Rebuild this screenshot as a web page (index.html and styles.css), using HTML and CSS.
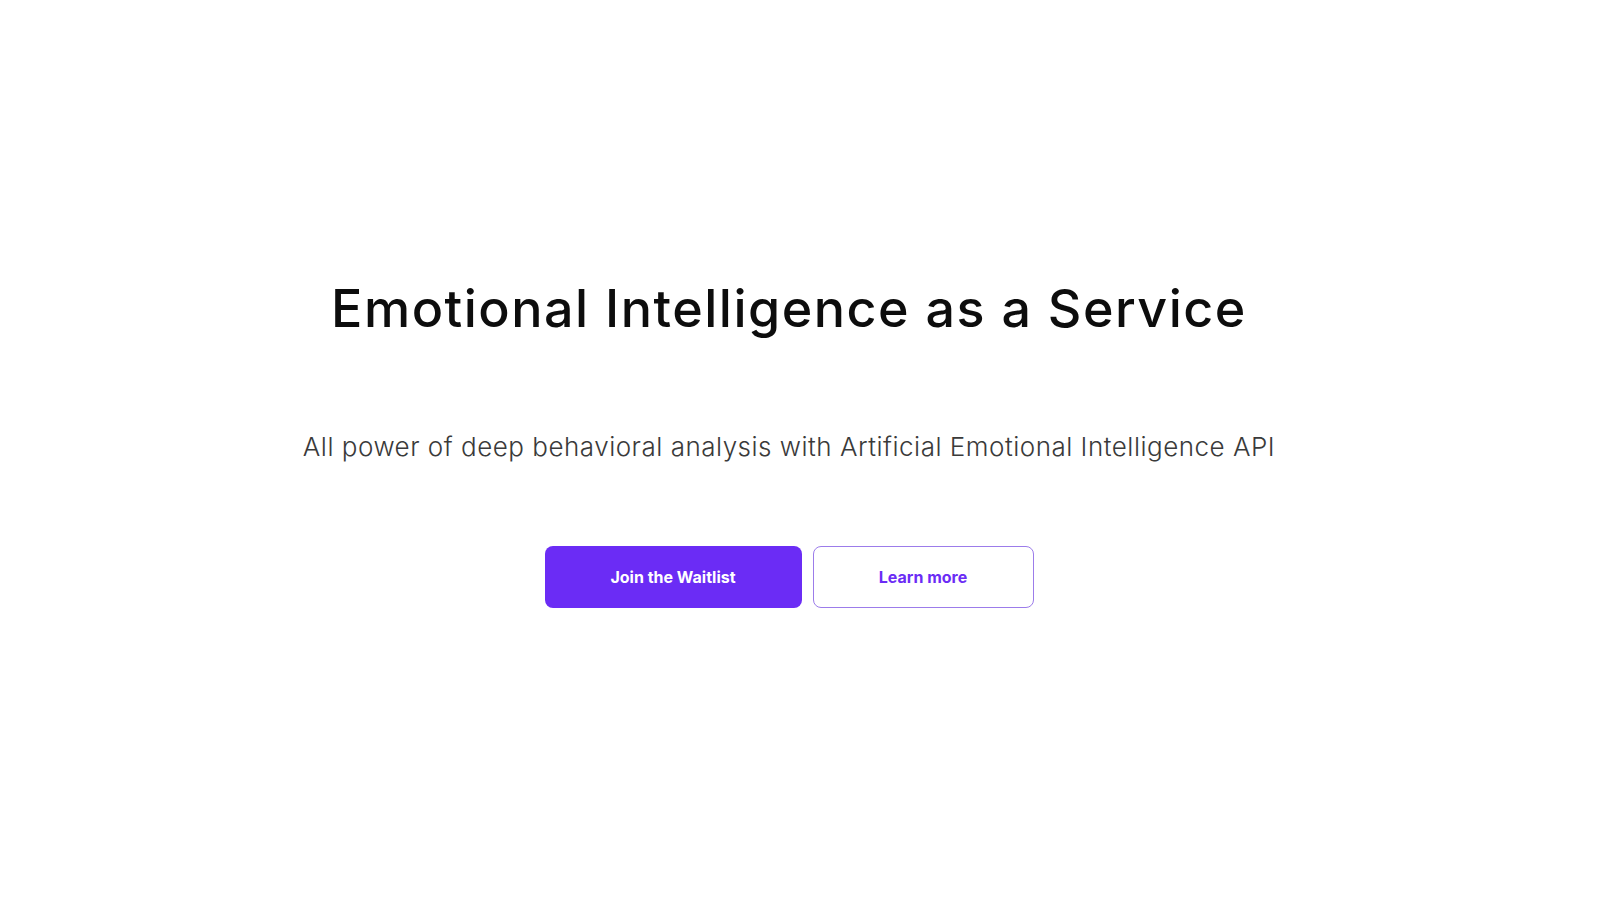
FILE: index.html
```html
<!DOCTYPE html>
<html lang="en">
<head>
<meta charset="utf-8">
<title>Emotional Intelligence as a Service</title>
<link rel="stylesheet" href="styles.css">
</head>
<body>
<main class="hero">
  <h1 class="hero-title">Emotional Intelligence as a Service</h1>
  <p class="hero-sub">All power of deep behavioral analysis with Artificial Emotional Intelligence API</p>
  <div class="hero-actions">
    <a class="btn btn-primary" href="#">Join the Waitlist</a>
    <a class="btn btn-outline" href="#">Learn more</a>
  </div>
</main>
</body>
</html>
```

FILE: styles.css
```css
html, body {
  margin: 0;
  padding: 0;
  background: #ffffff;
}
body {
  font-family: "Inter", "Lato", sans-serif;
  font-variant-ligatures: none;
  color: #111;
}
.hero {
  min-height: 100vh;
  box-sizing: border-box;
  padding: 277px 22px 0 0;
  display: flex;
  flex-direction: column;
  align-items: center;
  text-align: center;
}
.hero-title {
  margin: 0;
  font-size: 52px;
  font-weight: 500;
  line-height: 64px;
  letter-spacing: 1.5px;
  color: #0d0d0d;
}
.hero-sub {
  margin: 89px 0 0;
  font-size: 26px;
  font-weight: 300;
  color: #3a3a3a;
  line-height: 34px;
  letter-spacing: 0.5px;
}
.hero-actions {
  margin-top: 82px;
  display: flex;
  gap: 11px;
}
.btn {
  display: flex;
  align-items: center;
  justify-content: center;
  height: 62px;
  box-sizing: border-box;
  border-radius: 8px;
  font-size: 16px;
  font-weight: 700;
  text-decoration: none;
}
.btn-primary {
  width: 257px;
  background: #6b2cf5;
  color: #fff;
}
.btn-outline {
  width: 221px;
  background: #fff;
  color: #6b2cf5;
  border: 1.5px solid #9c7cea;
}
```
